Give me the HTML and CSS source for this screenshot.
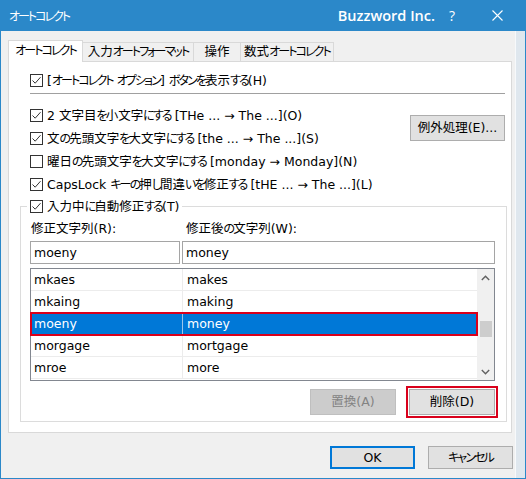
FILE: index.html
```html
<!DOCTYPE html>
<html lang="ja">
<head>
<meta charset="utf-8">
<title>オートコレクト</title>
<link rel="stylesheet" href="styles.css">
</head>
<body>
<div class="window">
  <div class="titlebar">
    <span class="title">オートコレクト</span>
    <span class="brand">Buzzword Inc.</span>
    <span class="help">?</span>
    <span class="close"><svg width="11" height="11" viewBox="0 0 11 11"><path d="M0.5 0.5L10.5 10.5M10.5 0.5L0.5 10.5" stroke="#fff" stroke-width="1.1" fill="none"/></svg></span>
  </div>
  <div class="body">
    <div class="tabs">
      <div class="tab active"><span class="k">オートコレクト</span></div>
      <div class="tab t2">入力<span class="k">オートフォーマット</span></div>
      <div class="tab t3">操作</div>
      <div class="tab t4">数式<span class="k">オートコレクト</span></div>
    </div>
    <div class="panel">
      <div class="row"><span class="cb"><svg width="11" height="11" viewBox="0 0 11 11"><path d="M1.5 5.5L4.2 8.2L9.5 2.2" stroke="#333" stroke-width="1" fill="none"/></svg></span><span class="txt">[<span class="k">オートコレクト</span> <span class="k">オプション</span>] <span class="k">ボタンを</span>表示<span class="k">する</span>(H)</span></div>
      <div class="sep"></div>
      <div class="opts">
        <div class="optlist">
          <div class="row"><span class="cb"><svg width="11" height="11" viewBox="0 0 11 11"><path d="M1.5 5.5L4.2 8.2L9.5 2.2" stroke="#333" stroke-width="1" fill="none"/></svg></span><span class="txt">2 文字目<span class="k">を</span>小文字<span class="k">にする</span> [THe ... → The ...](O)</span></div>
          <div class="row"><span class="cb"><svg width="11" height="11" viewBox="0 0 11 11"><path d="M1.5 5.5L4.2 8.2L9.5 2.2" stroke="#333" stroke-width="1" fill="none"/></svg></span><span class="txt">文<span class="k">の</span>先頭文字<span class="k">を</span>大文字<span class="k">にする</span> [the ... → The ...](S)</span></div>
          <div class="row"><span class="cb"></span><span class="txt">曜日<span class="k">の</span>先頭文字<span class="k">を</span>大文字<span class="k">にする</span> [monday → Monday](N)</span></div>
          <div class="row"><span class="cb"><svg width="11" height="11" viewBox="0 0 11 11"><path d="M1.5 5.5L4.2 8.2L9.5 2.2" stroke="#333" stroke-width="1" fill="none"/></svg></span><span class="txt">CapsLock <span class="k">キーの</span>押<span class="k">し</span>間違<span class="k">いを</span>修正<span class="k">する</span> [tHE ... → The ...](L)</span></div>
        </div>
        <button class="btn exc">例外処理(E)...</button>
      </div>
      <div class="group">
        <div class="legend"><span class="cb"><svg width="11" height="11" viewBox="0 0 11 11"><path d="M1.5 5.5L4.2 8.2L9.5 2.2" stroke="#333" stroke-width="1" fill="none"/></svg></span><span class="txt">入力中<span class="k">に</span>自動修正<span class="k">する</span>(T)</span></div>
        <div class="labels"><span class="lab1">修正文字列(R):</span><span>修正後<span class="k">の</span>文字列(W):</span></div>
        <div class="inputs"><div class="inp i1">moeny</div><div class="inp i2">money</div></div>
        <div class="list">
          <div class="rows">
            <div class="lrow"><span class="c1">mkaes</span><span class="c2">makes</span></div>
            <div class="lrow"><span class="c1">mkaing</span><span class="c2">making</span></div>
            <div class="lrow sel"><span class="c1">moeny</span><span class="c2">money</span></div>
            <div class="lrow"><span class="c1">morgage</span><span class="c2">mortgage</span></div>
            <div class="lrow"><span class="c1">mroe</span><span class="c2">more</span></div>
          </div>
          <div class="sbar">
            <div class="arrow"><svg width="9" height="6" viewBox="0 0 9 6"><path d="M0.8 5L4.5 1.3L8.2 5" stroke="#606060" stroke-width="1.4" fill="none"/></svg></div>
            <div class="track1"></div>
            <div class="thumb"></div>
            <div class="track2"></div>
            <div class="arrow"><svg width="9" height="6" viewBox="0 0 9 6"><path d="M0.8 1L4.5 4.7L8.2 1" stroke="#606060" stroke-width="1.4" fill="none"/></svg></div>
          </div>
        </div>
        <div class="gbtns"><button class="btn dis">置換(A)</button><button class="btn del">削除(D)</button></div>
      </div>
    </div>
    <div class="footer"><button class="btn fbtn ok">OK</button><button class="btn fbtn"><span class="k">キャンセル</span></button></div>
  </div>
</div>
</body>
</html>
```
FILE: styles.css
```css
* { box-sizing: border-box; }
html, body { margin: 0; padding: 0; }
body {
  width: 526px;
  height: 479px;
  overflow: hidden;
  background: #f0f0f0;
  font-family: "DejaVu Sans", "Noto Sans CJK JP", sans-serif;
  font-size: 12.5px;
  font-feature-settings: "palt";
  color: #000;
}
.k {
  font-size: 12px;
  letter-spacing: -1.9px;
}
.window {
  width: 526px;
  height: 479px;
  display: flex;
  flex-direction: column;
  background: #f0f0f0;
}
.titlebar {
  height: 31px;
  flex: none;
  background: #2b88c9;
  color: #fff;
  display: flex;
  align-items: center;
  padding-left: 9px;
}
.title {
  font-family: "Noto Sans CJK JP", sans-serif;
  font-size: 12px;
  letter-spacing: -2px;
  line-height: 16px;
}
.brand {
  margin-left: auto;
  font-family: "Open Sans", sans-serif;
  font-weight: 600;
  font-size: 14.5px;
  line-height: 18px;
}
.help {
  margin-left: 14px;
  font-family: "Open Sans", sans-serif;
  font-size: 14px;
  line-height: 18px;
}
.close {
  display: flex;
  margin-left: 37px;
  margin-right: 23px;
}
.body {
  flex: 1;
  border: 1px solid #2b88c9;
  border-top: 0;
  padding: 9px 0 0 7px;
  box-shadow: inset -9px 0 0 #dfe7ee, inset -10px 0 0 #f7f9fb;
}
.tabs {
  display: flex;
  align-items: flex-end;
  height: 22px;
  position: relative;
  z-index: 2;
}
.tab {
  height: 19px;
  margin-bottom: 1px;
  margin-left: -1px;
  border: 1px solid #d9d9d9;
  border-bottom: 0;
  background: #f0f0f0;
  text-align: center;
  white-space: nowrap;
  line-height: 17px;
}
.tab.active {
  height: 22px;
  margin-bottom: 0;
  margin-left: 0;
  width: 75px;
  background: #fff;
  position: relative;
  z-index: 1;
  line-height: 19px;
}
.t2 { width: 112px; }
.t3 { width: 48px; }
.t4 { width: 94px; }
.panel {
  margin-top: -1px;
  width: 504px;
  height: 372px;
  border: 1px solid #d9d9d9;
  background: #fff;
  padding-top: 7px;
}
.row {
  height: 23px;
  display: flex;
  align-items: center;
  padding-left: 21px;
  white-space: nowrap;
}
.txt { line-height: 16px; }
.cb {
  width: 13px;
  height: 13px;
  flex: none;
  border: 1px solid #333;
  background: #fff;
  margin-right: 4px;
  display: flex;
}
.sep {
  height: 1px;
  width: 475px;
  background: #a0a0a0;
  margin: 1px 0 10px 21px;
}
.opts { display: flex; }
.optlist { flex: 1; }
.btn {
  font: inherit;
  font-feature-settings: "palt";
  color: #000;
  background: #e1e1e1;
  border: 1px solid #adadad;
  padding: 0;
  height: 26px;
  width: 86px;
  line-height: 16px;
  white-space: nowrap;
}
.exc {
  width: 95px;
  margin: 11px 6px 0 0;
}
.group {
  border: 1px solid #dcdcdc;
  margin: 10px 4px 0 11px;
  height: 216px;
  padding-left: 9px;
}
.legend {
  display: flex;
  align-items: center;
  height: 23px;
  margin-top: -12px;
  margin-left: -3px;
  padding: 0 3px;
  background: #fff;
  width: max-content;
}
.labels {
  display: flex;
  height: 16px;
  margin-top: 3px;
  align-items: center;
  padding-left: 1px;
  line-height: 16px;
}
.lab1 { width: 155px; }
.inputs {
  display: flex;
  gap: 2px;
  margin-top: 4px;
}
.inp {
  height: 23px;
  border: 1px solid #a5a5a5;
  padding-left: 3px;
  display: flex;
  align-items: center;
  line-height: 16px;
}
.i1 { width: 150px; }
.i2 { width: 313px; }
.list {
  display: flex;
  margin-top: 4px;
  height: 113px;
  width: 465px;
  border: 1px solid #828790;
}
.rows { flex: 1; }
.lrow {
  display: flex;
  height: 22px;
  border-bottom: 1px solid #ececec;
  line-height: 16px;
}
.c1 {
  width: 152px;
  border-right: 1px solid #ececec;
  padding-left: 3px;
  display: flex;
  align-items: center;
}
.c2 {
  flex: 1;
  padding-left: 4px;
  display: flex;
  align-items: center;
}
.lrow.sel {
  background: #0078d7;
  color: #fff;
  outline: 2px solid #d9001b;
  outline-offset: -1px;
  position: relative;
}
.lrow.sel .c1 { border-right-color: #9cc5ea; }
.sbar {
  width: 17px;
  background: #f0f0f0;
  display: flex;
  flex-direction: column;
}
.arrow {
  height: 17px;
  display: flex;
  align-items: center;
  justify-content: center;
}
.track1 { height: 35px; }
.thumb {
  height: 16px;
  margin: 0 2px 0 3px;
  background: #cdcdcd;
}
.track2 { flex: 1; }
.gbtns {
  display: flex;
  justify-content: flex-end;
  gap: 13px;
  margin-top: 8px;
  width: 465px;
}
.dis {
  background: #cccccc;
  border-color: #bfbfbf;
  color: #838383;
}
.del {
  outline: 2px solid #d9001b;
  outline-offset: 1px;
}
.footer {
  display: flex;
  justify-content: flex-end;
  gap: 13px;
  margin-top: 13px;
  padding-right: 12px;
}
.fbtn {
  width: 85px;
  height: 23px;
}
.ok { border: 2px solid #0078d7; }
```
